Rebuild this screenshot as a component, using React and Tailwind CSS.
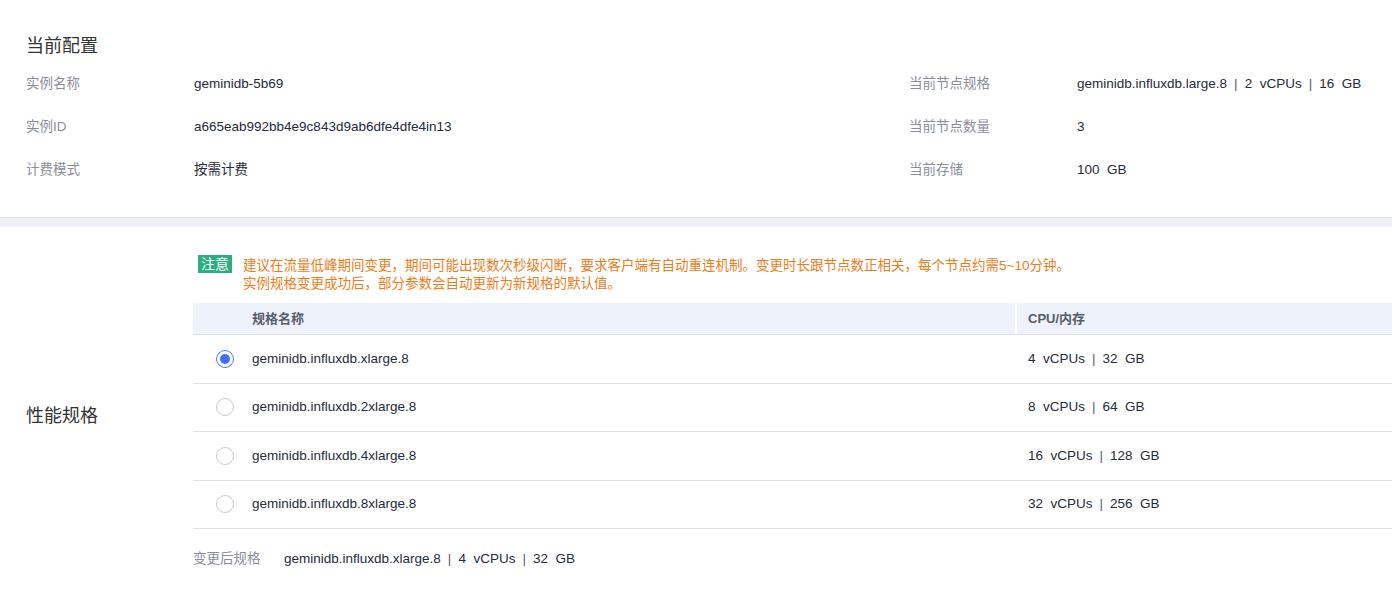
import React from 'react';

const font = { fontFamily: '"Liberation Sans", "Noto Sans CJK SC", sans-serif' };

const Spec = ({ parts }) => (
    <span className="inline-flex items-center">
        {parts.map((p, i) => (
            <React.Fragment key={i}>
                {i > 0 && <span className="mx-[7px] text-[#575d6c]">|</span>}
                <span className="whitespace-pre">{p}</span>
            </React.Fragment>
        ))}
    </span>
);

const InfoRow = ({ label, value }) => (
    <div className="flex items-center h-[43px]">
        <div className="w-[168px] text-[#8a8e99]">{label}</div>
        <div className="text-[#252b3a] whitespace-pre">{value}</div>
    </div>
);

const Radio = ({ checked }) => (
    checked ? (
        <div className="w-[18px] h-[18px] rounded-full border border-[#4d7cff] flex items-center justify-center">
            <div className="w-[10px] h-[10px] rounded-full bg-[#3f6fff]"></div>
        </div>
    ) : (
        <div className="w-[18px] h-[18px] rounded-full border border-[#c7cad1] bg-white"></div>
    )
);

const flavors = [
    { name: 'geminidb.influxdb.xlarge.8', cpu: ['4  vCPUs', '32  GB'], checked: true },
    { name: 'geminidb.influxdb.2xlarge.8', cpu: ['8  vCPUs', '64  GB'] },
    { name: 'geminidb.influxdb.4xlarge.8', cpu: ['16  vCPUs', '128  GB'] },
    { name: 'geminidb.influxdb.8xlarge.8', cpu: ['32  vCPUs', '256  GB'] },
];

export default function App() {
    return (
        <div className="w-[1392px] h-[595px] bg-white overflow-hidden text-[13.5px]" style={font}>
            {/* 当前配置 */}
            <div className="px-[26px] pt-[34px] pb-[25px]">
                <div className="text-[18px] leading-[24px] text-[#333] mb-[5px]">当前配置</div>
                <div className="flex">
                    <div className="w-[883px]">
                        <InfoRow label="实例名称" value="geminidb-5b69" />
                        <InfoRow label="实例ID" value="a665eab992bb4e9c843d9ab6dfe4dfe4in13" />
                        <InfoRow label="计费模式" value="按需计费" />
                    </div>
                    <div className="flex-1">
                        <InfoRow label="当前节点规格" value={<Spec parts={['geminidb.influxdb.large.8', '2  vCPUs', '16  GB']} />} />
                        <InfoRow label="当前节点数量" value="3" />
                        <InfoRow label="当前存储" value="100  GB" />
                    </div>
                </div>
            </div>

            {/* separator */}
            <div className="h-[10px] bg-[#eef0f5] border-t border-[#dcdfe6]"></div>

            {/* 性能规格 */}
            <div className="flex pt-[28px]">
                <div className="w-[193px] pl-[26px] flex items-center">
                    <div className="text-[18px] text-[#333] pt-[8px]">性能规格</div>
                </div>
                <div className="flex-1">
                    <div className="flex items-start pl-[5px]">
                        <span className="bg-[#2cae7f] text-white text-[14px] leading-[18px] px-[3px] mr-[11px]">注意</span>
                        <div className="text-[#ec7d19] leading-[18px] pt-[2px]">
                            <div>建议在流量低峰期间变更，期间可能出现数次秒级闪断，要求客户端有自动重连机制。变更时长跟节点数正相关，每个节点约需5~10分钟。</div>
                            <div>实例规格变更成功后，部分参数会自动更新为新规格的默认值。</div>
                        </div>
                    </div>

                    {/* table */}
                    <div className="mt-[10px]">
                        <div className="flex h-[32px] bg-[#eef2fa] border-b border-[#dfe1e6] font-bold text-[#575d6c] text-[13px]">
                            <div className="w-[822px] pl-[59px] flex items-center">规格名称</div>
                            <div className="flex-1 pl-[11px] flex items-center border-l-2 border-white">CPU/内存</div>
                        </div>
                        {flavors.map((f) => (
                            <div key={f.name} className="flex h-[48.5px] border-b border-[#dfe1e6] text-[#252b3a]">
                                <div className="w-[822px] flex items-center">
                                    <div className="w-[59px] pl-[23px]">
                                        <Radio checked={f.checked} />
                                    </div>
                                    <span>{f.name}</span>
                                </div>
                                <div className="flex-1 pl-[13px] flex items-center">
                                    <Spec parts={f.cpu} />
                                </div>
                            </div>
                        ))}
                    </div>

                    <div className="flex items-center mt-[20px] h-[20px]">
                        <span className="w-[91px] text-[#8a8e99]">变更后规格</span>
                        <span className="text-[#252b3a]">
                            <Spec parts={['geminidb.influxdb.xlarge.8', '4  vCPUs', '32  GB']} />
                        </span>
                    </div>
                </div>
            </div>
        </div>
    );
}
